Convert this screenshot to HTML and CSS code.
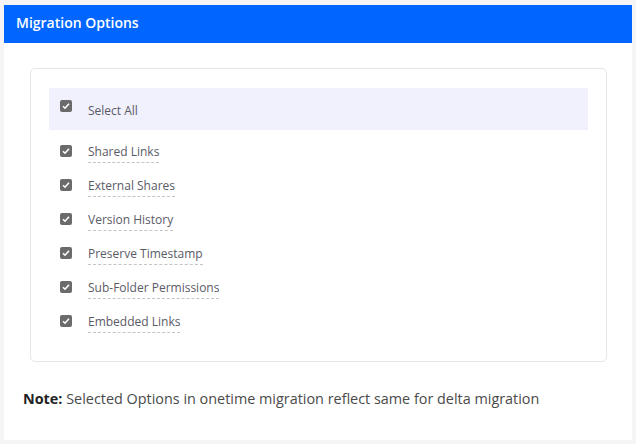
FILE: index.html
```html
<!DOCTYPE html>
<html lang="en">
<head>
  <meta charset="UTF-8">
  <title>Migration Options</title>
  <link rel="stylesheet" href="styles.css">
</head>
<body>

  <div class="card">
    <div class="card-header">Migration Options</div>

    <div class="card-body">
      <div class="options">

        <label class="option select-all">
          <span class="check"><svg viewBox="0 0 12 12"><path d="M3 6.2l2 2 4-4.4"/></svg></span>
          <span class="texto">Select All</span>
        </label>

        <label class="option">
          <span class="check"><svg viewBox="0 0 12 12"><path d="M3 6.2l2 2 4-4.4"/></svg></span>
          <span class="texto dashed">Shared Links</span>
        </label>

        <label class="option">
          <span class="check"><svg viewBox="0 0 12 12"><path d="M3 6.2l2 2 4-4.4"/></svg></span>
          <span class="texto dashed">External Shares</span>
        </label>

        <label class="option">
          <span class="check"><svg viewBox="0 0 12 12"><path d="M3 6.2l2 2 4-4.4"/></svg></span>
          <span class="texto dashed">Version History</span>
        </label>

        <label class="option">
          <span class="check"><svg viewBox="0 0 12 12"><path d="M3 6.2l2 2 4-4.4"/></svg></span>
          <span class="texto dashed">Preserve Timestamp</span>
        </label>

        <label class="option">
          <span class="check"><svg viewBox="0 0 12 12"><path d="M3 6.2l2 2 4-4.4"/></svg></span>
          <span class="texto dashed">Sub-Folder Permissions</span>
        </label>

        <label class="option">
          <span class="check"><svg viewBox="0 0 12 12"><path d="M3 6.2l2 2 4-4.4"/></svg></span>
          <span class="texto dashed">Embedded Links</span>
        </label>

      </div>

      <p class="note"><b>Note:</b> Selected Options in onetime migration reflect same for delta migration</p>
    </div>
  </div>

</body>
</html>
```

FILE: styles.css
```css
body {
  margin: 0;
  padding: 5px 4px 4px 4px;
  background: #f6f4f4;
  font-family: "Open Sans", sans-serif;
  color: #555;
}

.card {
  background: #fff;
  height: 435px;
}

.card-header {
  background: #0066ff;
  color: #fff;
  font-size: 14px;
  font-weight: 600;
  height: 38px;
  line-height: 36px;
  padding-left: 12px;
}

.card-body {
  padding: 25px 25px 0 26px;
}

.options {
  box-sizing: border-box;
  border: 1px solid #e6e6e6;
  border-radius: 5px;
  height: 294px;
  padding: 19px 18px 0 18px;
}

.option {
  display: flex;
  align-items: center;
  height: 34px;
  padding-left: 11px;
  font-size: 12px;
}

.select-all {
  background: #f1f1fd;
  height: 42px;
  margin-bottom: 4px;
  align-items: flex-start;
  padding-top: 12px;
  box-sizing: border-box;
}

.select-all .texto {
  margin-top: 2px;
}

.check {
  width: 12px;
  height: 12px;
  background: #6b6b6b;
  border-radius: 2px;
  display: flex;
  margin-right: 16px;
}

.check svg {
  width: 12px;
  height: 12px;
  fill: none;
  stroke: #fff;
  stroke-width: 1.6;
}

.texto {
  color: #5a5a66;
}

.dashed {
  border-bottom: 1px dashed #c4c4c4;
  padding-bottom: 2px;
  margin-top: 3px;
}

.note {
  margin: 27px 0 0 -7px;
  font-size: 14.4px;
  color: #4a4a4a;
}

.note b {
  color: #222;
}
```
